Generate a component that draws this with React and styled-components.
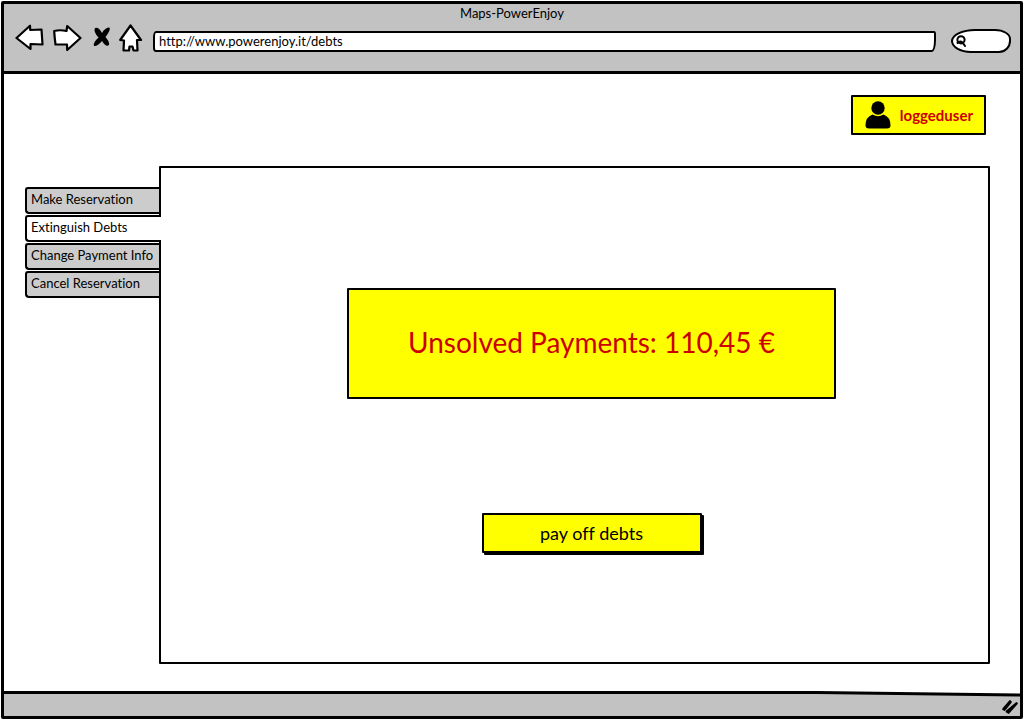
import React from "react";
import styled, { createGlobalStyle } from "styled-components";

const INK = "#000000";
const CHROME = "#c2c2c2";
const YELLOW = "#ffff00";
const RED = "#cc0000";

const GlobalStyle = createGlobalStyle`
  *, *::before, *::after { box-sizing: border-box; }
  body {
    margin: 0;
    background: #ffffff;
    color: ${INK};
    font-family: Lato, "Open Sans", sans-serif;
    font-size: 13px;
    line-height: 20px;
    font-variant-ligatures: none;
  }
  button, input { font: inherit; color: inherit; font-variant-ligatures: none; }
`;

const Page = styled.div`
  display: flex;
  min-height: 100vh;
  padding: 1px;
`;

const BrowserWindow = styled.div`
  flex: 1;
  min-width: 0;
  display: flex;
  flex-direction: column;
  border: 3px solid ${INK};
  border-radius: 2px;
  overflow: hidden;
`;

const Chrome = styled.header`
  background: ${CHROME};
  border-bottom: 3px solid ${INK};
  padding-bottom: 13px;
`;

const Title = styled.h1`
  margin: 0;
  font-size: 13px;
  font-weight: 400;
  line-height: 18px;
  text-align: center;
`;

const Toolbar = styled.div`
  display: flex;
  align-items: center;
  padding: 2px 9px 0 11px;
`;

const NavButtons = styled.div`
  display: flex;
  align-items: center;
  gap: 8px;
  margin-right: 10px;
  padding-bottom: 6px;
`;

const IconButton = styled.button`
  display: flex;
  padding: 0;
  border: 0;
  background: none;
`;

const AddressInput = styled.input`
  flex: 1;
  min-width: 0;
  height: 21px;
  padding: 0 4px;
  border: 2px solid ${INK};
  border-radius: 3px 2px 4px 3px / 6px 3px 12px 4px;
  background: #ffffff;
  line-height: 16px;
`;

const SearchBox = styled.label`
  display: flex;
  align-items: center;
  width: 60px;
  height: 24px;
  margin-left: 15px;
  padding: 0 8px 0 3px;
  border: 2px solid ${INK};
  border-radius: 24px 16px 12px 20px / 12px 10px 12px 12px;
  background: #ffffff;
`;

const SearchInput = styled.input`
  width: 100%;
  min-width: 0;
  height: 16px;
  padding: 0;
  border: 0;
  outline: 0;
  background: transparent;
`;

const Content = styled.div`
  flex: 1;
  display: flex;
  flex-direction: column;
  padding: 21px 30px 27px 21px;
`;

const UserRow = styled.div`
  display: flex;
  justify-content: flex-end;
  padding-right: 4px;
  margin-bottom: 31px;
`;

const UserButton = styled.button`
  display: flex;
  align-items: center;
  gap: 9px;
  height: 40px;
  padding: 0 11px 0 12px;
  border: 2px solid ${INK};
  border-radius: 1px;
  background: ${YELLOW};
  color: ${RED};
  font-size: 15px;
  font-weight: 700;
`;

const Workspace = styled.div`
  flex: 1;
  display: flex;
`;

const Tabs = styled.nav`
  display: flex;
  flex-direction: column;
  gap: 1px;
  width: 134px;
  padding-top: 21px;
`;

const Tab = styled.a`
  position: relative;
  height: 27px;
  margin-right: ${(p) => (p.$active ? "-2px" : "0")};
  padding-left: 4px;
  border: 2px solid ${INK};
  border-right: 0;
  border-radius: 3px 0 0 4px;
  background: ${(p) => (p.$active ? "#ffffff" : "#cccccc")};
  color: inherit;
  line-height: 21px;
  text-decoration: none;
  white-space: nowrap;
`;

const Panel = styled.main`
  flex: 1;
  min-width: 0;
  display: flex;
  flex-direction: column;
  align-items: center;
  gap: 114px;
  padding: 120px 152px 100px 186px;
  border: 2px solid ${INK};
  border-radius: 1px;
`;

const DebtNotice = styled.p`
  display: flex;
  align-items: center;
  justify-content: center;
  width: 100%;
  height: 111px;
  margin: 0;
  padding-bottom: 4px;
  border: 2px solid ${INK};
  border-radius: 1px;
  background: ${YELLOW};
  color: ${RED};
  font-size: 28px;
  line-height: 36px;
  white-space: nowrap;
`;

const PayButton = styled.button`
  width: 220px;
  height: 40px;
  padding: 0;
  border: 2px solid ${INK};
  border-radius: 1px;
  background: ${YELLOW};
  box-shadow: 2px 2px 0 ${INK};
  font-size: 18px;
`;

const StatusRule = styled.svg`
  display: block;
  width: 100%;
  height: 7px;
`;

const StatusBar = styled.footer`
  display: flex;
  justify-content: flex-end;
  align-items: center;
  height: 18px;
  padding-right: 1px;
  background: ${CHROME};
`;

const outline = { fill: "#fff", stroke: INK, strokeWidth: 2.2, strokeLinejoin: "round", strokeLinecap: "round" };

const BackIcon = () => (
  <svg width="30" height="28" viewBox="0 0 30 28" {...outline}>
    <path d="M1.500 14 L15 1.700 L15.200 6 L26.500 5.500 L27.500 20.500 L15.500 20 L15.500 25 Z" />
  </svg>
);

const ForwardIcon = () => (
  <svg width="30" height="28" viewBox="0 0 30 28" {...outline}>
    <path d="M1.200 7 Q7 5.500 13.500 7 L14.200 2 L27.500 14 L14.200 26 L14 20.500 L2.500 20.500 Q1.500 13 1.200 7 Z" />
  </svg>
);

const StopIcon = () => (
  <svg width="20" height="28" viewBox="0 0 20 28">
    <path
      fill={INK}
      d="M4 4 Q7.500 2.500 11 9 Q14 3.500 18.500 3.500 Q20 6 14.500 13 Q19 18.500 18 21 Q15 23.500 11 17 Q6.500 22.500 3 22 Q1.500 19 7.500 13.500 Q2 7.500 4 4 Z"
    />
  </svg>
);

const HomeIcon = () => (
  <svg width="24" height="28" viewBox="0 0 24 28" {...outline}>
    <path d="M11.500 1.500 L22 16 L18 16 L18.500 26.500 L14.500 26.500 L13.500 22.500 L10.500 22.500 L10 26.500 L4.500 26.500 L5 16.500 L1.200 16 Z" />
  </svg>
);

const SearchGlyph = styled.svg`
  flex: none;
`;

const SearchIcon = () => (
  <SearchGlyph width="12" height="12" viewBox="0 0 12 12" fill="none" stroke={INK} strokeWidth="2" strokeLinecap="round">
    <circle cx="5" cy="4.800" r="3.600" />
    <path d="M1.500 8 Q4 5.500 6.500 7.500 L9 11" />
  </SearchGlyph>
);

const UserIcon = () => (
  <svg width="26" height="28" viewBox="0 0 26 28" fill={INK}>
    <circle cx="13" cy="7" r="6.700" />
    <path d="M7.500 13.500 Q13 17 18.500 13.500 Q25.500 16 25.500 24.500 Q25.500 27.500 22 27.500 L4 27.500 Q.500 27.500 .500 24.500 Q.500 16 7.500 13.500 Z" />
  </svg>
);

const GripIcon = () => (
  <svg width="18" height="16" viewBox="0 0 18 16" fill="none" stroke={INK} strokeWidth="2.600" strokeLinecap="round" strokeLinejoin="round">
    <path d="M2.500 10 L9 2.500 M9.500 3 L3.500 10.500" />
    <path d="M6 12.500 L15.500 4.500 L7.500 13.500" />
  </svg>
);

const navButtons = [
  { label: "Back", Icon: BackIcon },
  { label: "Forward", Icon: ForwardIcon },
  { label: "Stop", Icon: StopIcon },
  { label: "Home", Icon: HomeIcon },
];

const tabs = [
  { label: "Make Reservation", href: "#reservation" },
  { label: "Extinguish Debts", href: "#debts", active: true },
  { label: "Change Payment Info", href: "#payment" },
  { label: "Cancel Reservation", href: "#cancel" },
];

export default function App() {
  return (
    <>
      <GlobalStyle />
      <Page>
        <BrowserWindow>
          <Chrome>
            <Title>Maps-PowerEnjoy</Title>
            <Toolbar>
              <NavButtons>
                {navButtons.map(({ label, Icon }) => (
                  <IconButton key={label} type="button" aria-label={label}>
                    <Icon />
                  </IconButton>
                ))}
              </NavButtons>
              <AddressInput type="text" aria-label="Address" defaultValue="http://www.powerenjoy.it/debts" />
              <SearchBox>
                <SearchIcon />
                <SearchInput type="text" aria-label="Search" />
              </SearchBox>
            </Toolbar>
          </Chrome>

          <Content>
            <UserRow>
              <UserButton type="button">
                <UserIcon />
                loggeduser
              </UserButton>
            </UserRow>
            <Workspace>
              <Tabs aria-label="Account">
                {tabs.map((tab) => (
                  <Tab key={tab.label} href={tab.href} $active={tab.active} aria-current={tab.active ? "page" : undefined}>
                    {tab.label}
                  </Tab>
                ))}
              </Tabs>
              <Panel>
                <DebtNotice>Unsolved Payments: 110,45 €</DebtNotice>
                <PayButton type="button">pay off debts</PayButton>
              </Panel>
            </Workspace>
          </Content>

          <StatusRule viewBox="0 0 100 7" preserveAspectRatio="none" aria-hidden="true">
            <path d="M0 1.500 L80 1.500 L100 4 L100 7 L0 7 Z" fill={CHROME} />
            <path d="M0 1.500 L80 1.500 L100 4" fill="none" stroke={INK} strokeWidth="3" vectorEffect="non-scaling-stroke" />
          </StatusRule>
          <StatusBar>
            <GripIcon />
          </StatusBar>
        </BrowserWindow>
      </Page>
    </>
  );
}
